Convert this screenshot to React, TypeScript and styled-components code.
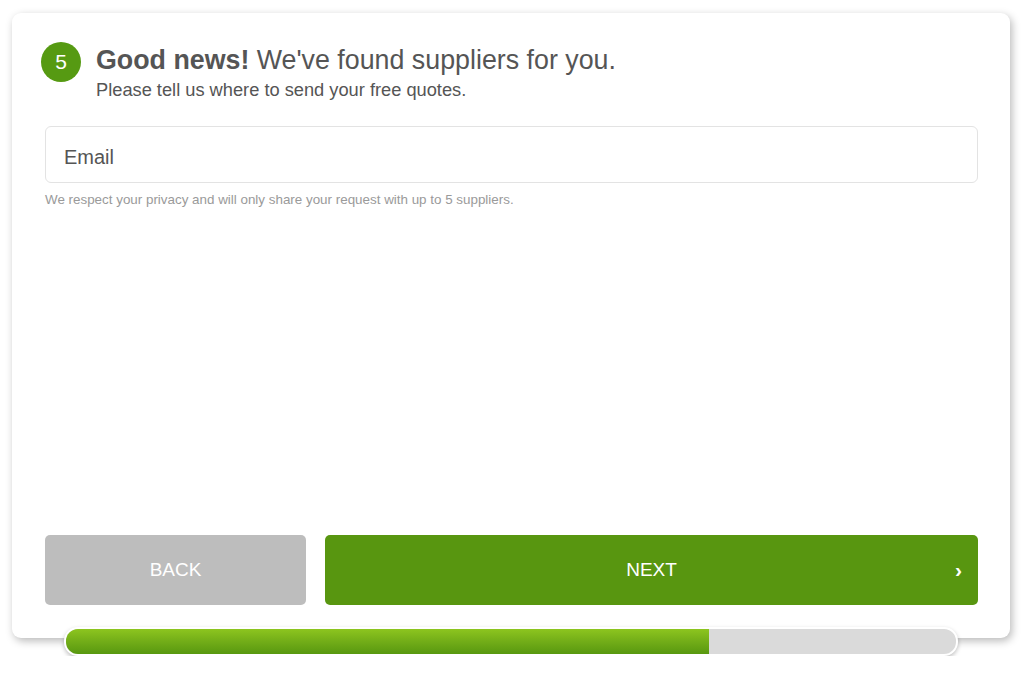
import React from 'react';
import styled, { createGlobalStyle } from 'styled-components';

const GlobalStyle = createGlobalStyle`
  html, body {
    margin: 0;
    padding: 0;
    background: #ffffff;
  }

  body {
    font-family: 'Liberation Sans', Arial, sans-serif;
    color: #555555;
  }
`;

export default function App() {
  const progress = 72.2;

  return (
    <>
      <GlobalStyle />
      <Page>
        <Card>
          <Header>
            <StepBadge>5</StepBadge>
            <div className="heading-text">
              <h1 className="title">
                <strong>Good news!</strong> We've found suppliers for you.
              </h1>
              <p className="subtitle">Please tell us where to send your free quotes.</p>
            </div>
          </Header>

          <EmailInput type="email" placeholder="Email" />
          <PrivacyNote>We respect your privacy and will only share your request with up to 5 suppliers.</PrivacyNote>

          <ButtonRow>
            <NavButton $variant="back">BACK</NavButton>
            <NavButton $variant="next">
              NEXT
              <span className="chevron">›</span>
            </NavButton>
          </ButtonRow>
        </Card>

        <ProgressTrack>
          <ProgressFill style={{ width: `${progress}%` }} />
        </ProgressTrack>
      </Page>
    </>
  );
}

const Page = styled.div`
  padding: 13px 14px 0 12px;
  display: flex;
  flex-direction: column;
  align-items: center;
`;

const Card = styled.div`
  box-sizing: border-box;
  width: 998px;
  height: 625px;
  background: #ffffff;
  border-radius: 9px;
  box-shadow: 2px 3px 9px rgba(0, 0, 0, 0.28);
  padding: 28px 32px 0 33px;
  display: flex;
  flex-direction: column;
`;

const Header = styled.div`
  display: flex;
  align-items: flex-start;
  gap: 15px;
  margin-left: -4px;

  .heading-text {
    padding-top: 2px;
  }

  .title {
    margin: 0;
    font-size: 26.8px;
    font-weight: normal;
    line-height: 34px;
    color: #555555;
  }

  .title strong {
    font-weight: bold;
  }

  .subtitle {
    margin: 1px 0 0;
    font-size: 18.25px;
    line-height: 24px;
    color: #555555;
  }
`;

const StepBadge = styled.div`
  flex: none;
  width: 40px;
  height: 40px;
  margin-top: 1px;
  border-radius: 50%;
  background: #569a12;
  color: #ffffff;
  font-size: 21px;
  display: flex;
  align-items: center;
  justify-content: center;
`;

const EmailInput = styled.input`
  box-sizing: border-box;
  margin-top: 24px;
  width: 100%;
  height: 57px;
  border: 1px solid #e3e3e3;
  border-radius: 6px;
  padding: 5px 18px 0;
  font-family: 'Liberation Sans', Arial, sans-serif;
  font-size: 20px;
  color: #555555;
  outline: none;

  &::placeholder {
    color: #555555;
  }
`;

const PrivacyNote = styled.p`
  margin: 9px 0 0;
  font-size: 13.4px;
  color: #9a9a9a;
`;

const ButtonRow = styled.div`
  margin-top: auto;
  margin-bottom: 33px;
  display: grid;
  grid-template-columns: 261px 1fr;
  gap: 19px;
`;

const NavButton = styled.button<{ $variant: 'back' | 'next' }>`
  position: relative;
  height: 70px;
  border: none;
  border-radius: 5px;
  background: ${({ $variant }) => ($variant === 'next' ? '#589610' : '#bdbdbd')};
  color: #ffffff;
  font-family: 'Liberation Sans', Arial, sans-serif;
  font-size: 19px;
  display: flex;
  align-items: center;
  justify-content: center;

  .chevron {
    position: absolute;
    right: 16px;
    top: 50%;
    transform: translateY(-50%);
    font-size: 21px;
    font-weight: bold;
  }
`;

const ProgressTrack = styled.div`
  position: relative;
  z-index: 1;
  box-sizing: border-box;
  margin-top: -11px;
  width: 894px;
  height: 29px;
  border: 2px solid #ffffff;
  border-radius: 14px;
  background: #dadada;
  overflow: hidden;
  box-shadow: 0 2px 4px rgba(0, 0, 0, 0.25);
`;

const ProgressFill = styled.div`
  height: 100%;
  background: linear-gradient(to bottom, #8dc51f 0%, #72ad18 50%, #589810 100%);
`;
